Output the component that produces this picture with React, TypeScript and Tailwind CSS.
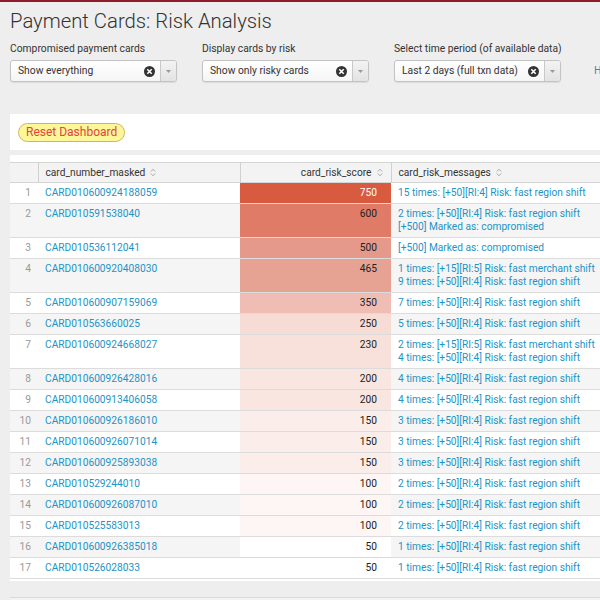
import React from 'react';

type Row = {
  card: string;
  score: number;
  heat: string;
  messages: string[];
};

const rows: Row[] = [
  { card: 'CARD010600924188059', score: 750, heat: 'bg-[#d85a3f]', messages: ['15 times: [+50][RI:4] Risk: fast region shift'] },
  { card: 'CARD010591538040', score: 600, heat: 'bg-[#e07b67]', messages: ['2 times: [+50][RI:4] Risk: fast region shift', '[+500] Marked as: compromised'] },
  { card: 'CARD010536112041', score: 500, heat: 'bg-[#e4998a]', messages: ['[+500] Marked as: compromised'] },
  { card: 'CARD010600920408030', score: 465, heat: 'bg-[#e6a393]', messages: ['1 times: [+15][RI:5] Risk: fast merchant shift', '9 times: [+50][RI:4] Risk: fast region shift'] },
  { card: 'CARD010600907159069', score: 350, heat: 'bg-[#efbdb3]', messages: ['7 times: [+50][RI:4] Risk: fast region shift'] },
  { card: 'CARD010563660025', score: 250, heat: 'bg-[#f7dcd6]', messages: ['5 times: [+50][RI:4] Risk: fast region shift'] },
  { card: 'CARD010600924668027', score: 230, heat: 'bg-[#f8e0db]', messages: ['2 times: [+15][RI:5] Risk: fast merchant shift', '4 times: [+50][RI:4] Risk: fast region shift'] },
  { card: 'CARD010600926428016', score: 200, heat: 'bg-[#f9e6e1]', messages: ['4 times: [+50][RI:4] Risk: fast region shift'] },
  { card: 'CARD010600913406058', score: 200, heat: 'bg-[#f9e6e1]', messages: ['4 times: [+50][RI:4] Risk: fast region shift'] },
  { card: 'CARD010600926186010', score: 150, heat: 'bg-[#fbede9]', messages: ['3 times: [+50][RI:4] Risk: fast region shift'] },
  { card: 'CARD010600926071014', score: 150, heat: 'bg-[#fbede9]', messages: ['3 times: [+50][RI:4] Risk: fast region shift'] },
  { card: 'CARD010600925893038', score: 150, heat: 'bg-[#fbede9]', messages: ['3 times: [+50][RI:4] Risk: fast region shift'] },
  { card: 'CARD010529244010', score: 100, heat: 'bg-[#fdf6f4]', messages: ['2 times: [+50][RI:4] Risk: fast region shift'] },
  { card: 'CARD010600926087010', score: 100, heat: 'bg-[#fdf6f4]', messages: ['2 times: [+50][RI:4] Risk: fast region shift'] },
  { card: 'CARD010525583013', score: 100, heat: 'bg-[#fdf6f4]', messages: ['2 times: [+50][RI:4] Risk: fast region shift'] },
  { card: 'CARD010600926385018', score: 50, heat: 'bg-white', messages: ['1 times: [+50][RI:4] Risk: fast region shift'] },
  { card: 'CARD010526028033', score: 50, heat: 'bg-white', messages: ['1 times: [+50][RI:4] Risk: fast region shift'] },
];

const SortIcon = () => (
  <svg width="6" height="9" viewBox="0 0 6 9" className="inline-block ml-[5px] align-[-1px]">
    <path d="M0.8 3.6 L3 1.2 L5.2 3.6" fill="none" stroke="#aaa" strokeWidth="1" />
    <path d="M0.8 5.4 L3 7.8 L5.2 5.4" fill="none" stroke="#aaa" strokeWidth="1" />
  </svg>
);

const ClearIcon = () => (
  <svg width="11" height="11" viewBox="0 0 11 11" className="shrink-0">
    <circle cx="5.5" cy="5.5" r="5.5" fill="#333" />
    <path d="M3.3 3.3 L7.7 7.7 M7.7 3.3 L3.3 7.7" stroke="#fff" strokeWidth="1.6" />
  </svg>
);

const Dropdown = ({ label, value }: { label: string; value: string }) => (
  <div className="w-[167px] shrink-0">
    <div className="text-[10.3px] text-[#333] leading-[14px] mb-[4px] whitespace-nowrap">{label}</div>
    <div className="flex h-[22px] bg-gradient-to-b from-white to-[#f5f5f5] border border-[#c3c3c3] rounded-[3px] shadow-[0_1px_1px_rgba(0,0,0,0.08)]">
      <div className="flex-1 flex items-center pl-[7px] pr-[5px] text-[10.3px] text-[#333]">
        <span className="flex-1 truncate">{value}</span>
        <ClearIcon />
      </div>
      <div className="w-[16px] flex items-center justify-center border-l border-[#c8c8c8] bg-gradient-to-b from-[#f3f3f3] to-[#e3e3e3] rounded-r-[3px]">
        <svg width="5" height="3" viewBox="0 0 5 3">
          <path d="M0 0 H5 L2.5 3 Z" fill="#999" />
        </svg>
      </div>
    </div>
  </div>
);

export default function App() {
  return (
    <div className="w-[600px] h-[600px] overflow-hidden bg-[#eeeeee] border-t-2 border-[#8d1d2c] font-['Roboto','Liberation_Sans',sans-serif]">
      <div className="px-[10px]">
        <h1 className="pt-[6px] text-[20.3px] font-light text-[#333] leading-[26px]">
          Payment Cards: Risk Analysis
        </h1>
        <div className="flex gap-[25px] mt-[8px] items-start">
          <Dropdown label="Compromised payment cards" value="Show everything" />
          <Dropdown label="Display cards by risk" value="Show only risky cards" />
          <Dropdown label="Select time period (of available data)" value="Last 2 days (full txn data)" />
          <a className="mt-[22px] text-[10.3px] text-[#1e93c6] whitespace-nowrap leading-[14px] pl-[8px]">Hide Filters</a>
        </div>
      </div>

      <div className="ml-[10px] mt-[32px] h-[36px] bg-white flex items-center pl-[8px]">
        <button className="h-[19px] px-[7px] rounded-full bg-[#fdf79a] border border-[#d8b451] text-[#e5433b] text-[12px] leading-[16px]">
          Reset Dashboard
        </button>
      </div>

      <div className="ml-[10px] mt-[5px] bg-white pt-[7px] pb-[2px]">
        <table className="border-collapse w-[590px] table-fixed text-[10.2px] leading-[13px]">
          <colgroup>
            <col className="w-[28px]" />
            <col className="w-[202px]" />
            <col className="w-[151px]" />
            <col className="w-[209px]" />
          </colgroup>
          <thead>
            <tr className="h-[20px] bg-[#f3f3f3] border-t border-[#ccc] border-b border-[#d5d5d5] text-[#333]">
              <th className="border-r border-[#d0d0d0]"></th>
              <th className="border-r border-[#d0d0d0] text-left font-normal pl-[7px]">
                card_number_masked<SortIcon />
              </th>
              <th className="border-r border-[#d0d0d0] text-right font-normal pr-[8px]">
                card_risk_score<SortIcon />
              </th>
              <th className="text-left font-normal pl-[7px] whitespace-nowrap">
                card_risk_messages<SortIcon />
              </th>
            </tr>
          </thead>
          <tbody>
            {rows.map((r, i) => {
              const striped = i % 2 === 1 ? 'bg-[#f5f5f5]' : 'bg-white';
              return (
                <tr key={r.card} className="border-b border-[#dcdcdc] align-top">
                  <td className={`${striped} text-right pr-[7px] pt-[3px] pb-[4px] text-[#999]`}>{i + 1}</td>
                  <td className={`${striped} pl-[7px] pt-[3px] pb-[4px] text-[#1e93c6]`}>{r.card}</td>
                  <td className={`${r.heat} text-right pr-[14px] pt-[3px] pb-[4px] ${r.score === 750 ? 'text-white' : 'text-[#222]'}`}>
                    {r.score}
                  </td>
                  <td className={`${striped} pl-[7px] pt-[3px] pb-[4px] text-[#1e93c6] whitespace-nowrap`}>
                    {r.messages.map((m) => (
                      <div key={m}>{m}</div>
                    ))}
                  </td>
                </tr>
              );
            })}
          </tbody>
        </table>
      </div>
      <div className="ml-[10px] mt-[16px] border-t border-[#dadada] h-[10px] bg-[#f2f2f2]"></div>
    </div>
  );
}
